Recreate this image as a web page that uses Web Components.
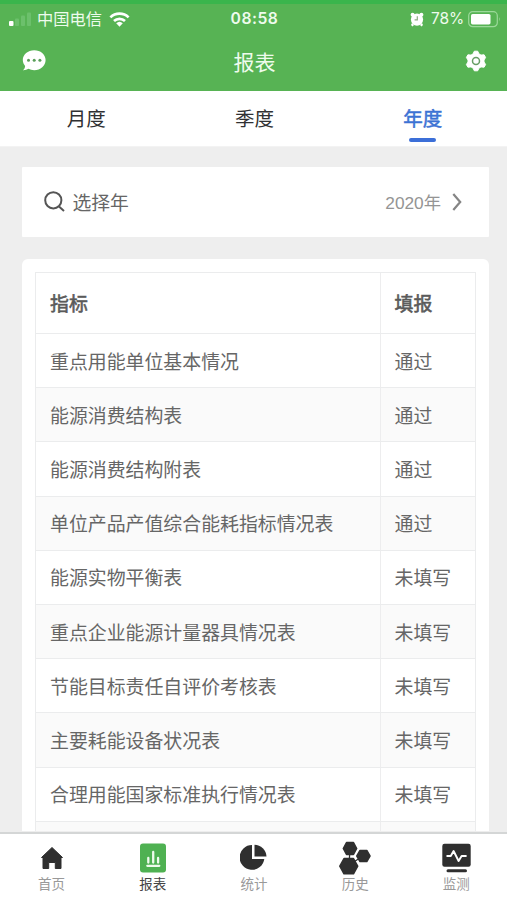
<!DOCTYPE html>
<html lang="zh-CN">
<head>
<meta charset="utf-8">
<title>报表</title>
<style>
html,body{margin:0;height:100%;overflow:hidden}
body{font-family:"Liberation Sans","Noto Sans CJK SC",sans-serif;background:#eee}
</style>
</head>
<body>
<report-app></report-app>
<script>
const define = (name, html, init) => customElements.define(name, class extends HTMLElement {
  constructor() {
    super();
    const t = document.createElement('template');
    t.innerHTML = html;
    this.attachShadow({mode: 'open'}).appendChild(t.content.cloneNode(true));
  }
  connectedCallback() { if (init) init(this, this.shadowRoot); }
});

define('status-bar', `<style>
:host{display:flex;height:38px;box-sizing:border-box;border-top:4px solid #3ab54c;color:#eefbed;align-items:center;padding:0 6px 4px 8px;font-size:16px;line-height:24px}
.side{flex:1;display:flex;align-items:center}
.right{justify-content:flex-end}
.carrier{margin:0 7px 0 5px;font-size:16.3px}
.time{font-family:Inter,"Liberation Sans",sans-serif;font-weight:600;font-size:15.7px;letter-spacing:.5px}
.pct{font-family:Inter,"Liberation Sans",sans-serif;font-size:15.5px;margin:0 4px 0 7px;letter-spacing:-.1px}
svg{display:block}
</style>
<div class="side"><svg width="24" height="16" viewBox="0 0 24 16"><rect x="1" y="10" width="4.5" height="5" rx="1" fill="#fff"/><g fill="#6cc06c"><rect x="7" y="7.5" width="4" height="7.5" rx="1"/><rect x="13" y="4.5" width="4" height="10.5" rx="1"/><rect x="19" y="1.5" width="4" height="13.5" rx="1"/></g></svg><span class="carrier">中国电信</span><svg width="21" height="15" viewBox="0 0 21 15" fill="none" stroke="#fff" stroke-width="2.7"><path d="M1.4 5.4a13 13 0 0 1 18.2 0M5 9.1a8 8 0 0 1 11 0"/><path d="M7.2 11.3a4.8 4.8 0 0 1 6.6 0L10.5 14.8z" fill="#fff" stroke="none"/></svg></div>
<span class="time">08:58</span>
<div class="side right"><svg width="14" height="15" viewBox="0 0 14 15"><g fill="#fff"><circle cx="2.6" cy="2.8" r="2"/><circle cx="11.4" cy="2.8" r="2"/><circle cx="7" cy="7.6" r="6.1"/><path d="M2 11l2 2-1.5 1.5L1 13zM12 11l-2 2 1.5 1.5L13 13z"/></g><path d="M7.3 4.2v3.7H4.6" stroke="#8bac80" stroke-width="1.2" fill="none"/></svg><span class="pct">78%</span><svg width="33" height="17" viewBox="0 0 33 17"><rect x=".7" y=".7" width="28.6" height="15" rx="4" fill="none" stroke="#9cd99a" stroke-width="1.2"/><rect x="3" y="3" width="19.5" height="10.4" rx="1.6" fill="#fff"/><path d="M31 6q1.6 2.2 0 4.4z" fill="#9cd99a"/></svg></div>`);

define('title-bar', `<style>
:host{display:grid;grid-template-columns:1fr auto 1fr;height:53px;align-items:center;padding:0 20px 0 22px;box-sizing:border-box;color:#eefbed}
span{font-size:21px;line-height:30px;padding-bottom:3px}
svg{display:block;margin-top:-8px}
.gear{justify-self:end}
</style>
<svg width="24" height="21" viewBox="0 0 24 21"><path fill="#fff" d="M12.200.2C5.900.2.8 4.600.8 10c0 2.200.9 4.300 2.300 5.900C3 17.800 2.300 19.100.9 20.200c2.100.1 4-.4 5.600-1.400 1.700.9 3.600 1.400 5.700 1.400C18.500 20.200 23.600 15.600 23.600 10S18.500.2 12.200.2z"/><g fill="#5b9f5b"><circle cx="6.500" cy="10.300" r="1.500"/><circle cx="12.200" cy="10.300" r="1.500"/><circle cx="17.900" cy="10.300" r="1.500"/></g></svg>
<span>报表</span>
<svg class="gear" width="22" height="22" viewBox="0 0 22 22"><path d="M9.300 1.200h3.400l1.300 2.800 2 1.100 3.100-.3 1.500 2.700-1.600 2.500v2l1.600 2.500-1.500 2.700-3.100-.3-2 1.100-1.300 2.800H9.300L8 18l-2-1.100-3.100.3-1.500-2.700L3 12v-2L1.400 7.500l1.500-2.700 3.100.3L8 4z" fill="#fff" stroke="#fff" stroke-linejoin="round"/><circle cx="11" cy="11" r="3.500" fill="#fff" stroke="#679e65" stroke-width="1.500"/></svg>`);

define('tab-item', `<style>
:host{display:flex;flex-direction:column;align-items:center;width:169px;padding-top:14px;box-sizing:border-box;color:#303133;font-size:19.500px;line-height:29px}
:host([active]){color:#3c72d4;-webkit-text-stroke:.5px #3c72d4}
i{display:none;width:27px;height:4px;border-radius:2px;background:#3c6fd8;margin-top:3.500px}
:host([active]) i{display:block}
</style><slot></slot><i></i>`);

define('tab-bar', `<style>:host{display:flex;height:56px;box-sizing:border-box;background:#fff;border-bottom:1px solid #f3f3f3;padding-left:2px}tab-item{flex-shrink:0}</style><slot></slot>`);

define('year-picker', `<style>
:host{display:flex;height:70px;margin:20px 18px 0 21.500px;padding:0 27px 0 22px;background:#fff;align-items:center;box-sizing:border-box;font-size:18.800px;color:#666;border-radius:1px}
.l{flex:1;margin-left:8px}.v{font-size:17.300px;color:#949494;margin-right:11px}
.l{line-height:30px;padding-top:3px}
.v{line-height:30px;padding-top:1px}
svg{display:block}
</style>
<svg width="21" height="22" viewBox="0 0 21 22" fill="none" stroke="#555" stroke-width="2"><circle cx="9.300" cy="9.300" r="8.100"/><path d="M15 15.500l5 4.500"/></svg><span class="l">选择年</span><span class="v">2020年</span><svg width="10" height="18" viewBox="0 0 10 18" fill="none" stroke="#858585" stroke-width="2.200"><path d="M1.300 1l6.900 8-6.900 8"/></svg>`);

define('report-row', `<style>
:host{display:flex;height:54.200px;box-sizing:border-box;border-bottom:1px solid #ebeced;font-size:18.900px;color:#666;line-height:30px;background:#fff}
:host([striped]){background:#fafafa}
:host([head]){height:61px;color:#5a5a5a;-webkit-text-stroke:.6px #5a5a5a}
div{display:flex;align-items:center;padding-left:14px;box-sizing:border-box;white-space:nowrap;padding-top:4px}
:host([head]) div{padding-top:3px}
.a{flex:1}.b{width:95px;border-left:1.500px solid #ededee}
</style><div class="a"><slot name="name"></slot></div><div class="b"><slot name="state"></slot></div>`);

define('report-table', `<style>
:host{display:block;margin:22px 18.500px 0 22px;padding:13px 13px 0;background:#fff;border-radius:6px 6px 0 0;flex:1;min-height:0;overflow:hidden}
.t{border:1px solid #ebeced;border-bottom:0}
</style><div class="t"></div>`, (el, root) => {
  const rows = [['指标','填报'],['重点用能单位基本情况','通过'],['能源消费结构表','通过'],['能源消费结构附表','通过'],['单位产品产值综合能耗指标情况表','通过'],['能源实物平衡表','未填写'],['重点企业能源计量器具情况表','未填写'],['节能目标责任自评价考核表','未填写'],['主要耗能设备状况表','未填写'],['合理用能国家标准执行情况表','未填写'],['','']];
  root.querySelector('.t').innerHTML = rows.map(([a,b],i) =>
    `<report-row ${i===0?'head':i%2===0?'striped':''}><span slot="name">${a}</span><span slot="state">${b}</span></report-row>`).join('');
});

define('nav-item', `<style>
:host{display:flex;flex-direction:column;align-items:center;width:101.200px;flex-shrink:0;color:#999;font-size:13.500px;line-height:20px}
:host([active]){color:#444}
.i{height:34px;display:flex;align-items:center;justify-content:center;margin:7px 0 0}
</style><div class="i"><slot name="icon"></slot></div><span><slot></slot></span>`);

define('nav-bar', `<style>
:host{display:flex;height:68px;box-sizing:border-box;background:#fff;border-top:2px solid #d4d6d6;padding-left:1px}
svg{display:block}
</style>
<nav-item><svg slot="icon" width="24" height="24" viewBox="0 0 24 24"><path fill="#2f2f2f" stroke="#2f2f2f" stroke-linejoin="round" d="M12 1.500l10.500 10h-1.500V22.500h-5.700v-6H8.700v6H3V11.500H1.500z"/></svg>首页</nav-item>
<nav-item active><svg slot="icon" width="26" height="30" viewBox="0 0 26 30"><rect x="0" y=".5" width="26" height="29" rx="3" fill="#4fb152"/><path d="M8.300 15v4.500M13.200 9v10.500M18.100 15v4.500M7.300 22.800h12" stroke="#effbed" stroke-width="2.300" stroke-linecap="round"/></svg>报表</nav-item>
<nav-item><svg slot="icon" width="27" height="28" viewBox="0 0 27 28" fill="#2f2f2f"><path d="M12 1v14h12.300A12.400 12.400 0 1 1 12 1z"/><path d="M14.500.8A12.400 12.400 0 0 1 26.500 12.600h-12z"/></svg>统计</nav-item>
<nav-item><svg slot="icon" width="32" height="34" viewBox="0 0 32 34" fill="#2f2f2f" stroke="#2f2f2f" stroke-width="1.500" stroke-linejoin="round"><path d="M11 8L10 24M10 24l14-9" fill="none" stroke-width="1.300"/><path d="M7.500 1.500h7l3.200 6-3.200 6h-7L4.300 7.500zM21 9.500h6.800l3.200 5.500-3.200 5.500H21L17.800 15zM5 17.500h9.500l4.200 7.700-4.200 7.600H5L.8 25.200z"/></svg>历史</nav-item>
<nav-item><svg slot="icon" width="29" height="30" viewBox="0 0 29 30"><rect x=".3" y=".8" width="28.400" height="23" rx="2.200" fill="#2f2f2f"/><path d="M4.500 13h4.300l2.800-5 5 10 3-5h5" fill="none" stroke="#fff" stroke-width="1.900" stroke-linejoin="round"/><path d="M6 27.800h17.500" stroke="#2f2f2f" stroke-width="3" stroke-linecap="round"/></svg>监测</nav-item>`);

define('report-app', `<style>
:host{display:flex;flex-direction:column;width:507px;height:900px;background:#eee}
header{background:#57b354}
nav-bar{margin-top:1px}
</style>
<header><status-bar></status-bar><title-bar></title-bar></header>
<tab-bar><tab-item>月度</tab-item><tab-item>季度</tab-item><tab-item active>年度</tab-item></tab-bar>
<year-picker></year-picker>
<report-table></report-table>
<nav-bar></nav-bar>`);
</script>
</body>
</html>
